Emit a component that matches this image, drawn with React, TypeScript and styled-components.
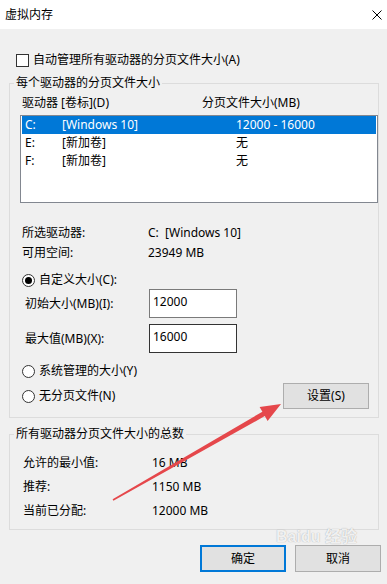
import styled, { createGlobalStyle } from "styled-components";

const GlobalStyle = createGlobalStyle`
  html, body {
    margin: 0;
    padding: 0;
    background: #f0f0f0;
  }
`;

const Dialog = styled.div`
  position: relative;
  width: 387px;
  height: 584px;
  overflow: hidden;
  background: #f0f0f0;
  font-family: "Noto Sans", "Noto Sans CJK SC", sans-serif;
  font-size: 12px;
  line-height: 16px;
  color: #000;
`;

const TitleBar = styled.div`
  height: 29px;
  background: #fff;
  display: flex;
  align-items: center;
  justify-content: space-between;
  padding: 0 5px 0 5px;
`;

const Body = styled.div`
  padding: 23px 0 0 9px;
`;

const CheckRow = styled.label`
  display: flex;
  align-items: center;
  gap: 4px;
  height: 16px;
  padding-left: 7px;
`;

const Box = styled.span`
  width: 13px;
  height: 13px;
  box-sizing: border-box;
  border: 1px solid #333;
  background: #fff;
`;

const Group = styled.fieldset<{ $top: number }>`
  margin: ${({ $top }) => $top}px 0 0 0;
  width: 370px;
  box-sizing: border-box;
  border: 1px solid #dcdcdc;
  padding: 0;
  min-width: 0;
`;

const Legend = styled.legend`
  margin-left: 4px;
  padding: 0 2px;
  line-height: 16px;
`;

const GroupBody = styled.div<{ $pad: string }>`
  padding: ${({ $pad }) => $pad};
`;

const HeaderRow = styled.div`
  display: grid;
  grid-template-columns: 180px 1fr;
  height: 16px;
  padding-left: 2px;
`;

const ListBox = styled.div`
  margin-top: 4px;
  width: 358px;
  height: 88px;
  box-sizing: border-box;
  border: 1px solid #828790;
  background: #fff;
`;

const ListRow = styled.div<{ $selected?: boolean }>`
  display: grid;
  grid-template-columns: 37px 174px 1fr;
  align-items: center;
  height: 18px;
  margin: 0 1px;
  padding-left: 3px;
  background: ${({ $selected }) => ($selected ? "#0078d7" : "transparent")};
  color: ${({ $selected }) => ($selected ? "#fff" : "#000")};
`;

const InfoBlock = styled.div`
  margin-top: 20px;
`;

const InfoRow = styled.div<{ $label: number; $height: number }>`
  display: grid;
  grid-template-columns: ${({ $label }) => $label}px 1fr;
  align-items: center;
  height: ${({ $height }) => $height}px;
  padding-left: 2px;
`;

const RadioRow = styled.label<{ $top: number }>`
  display: flex;
  align-items: center;
  gap: 4px;
  height: 16px;
  margin-top: ${({ $top }) => $top}px;
  padding-left: 2px;
`;

const Radio = styled.span<{ $checked?: boolean }>`
  position: relative;
  width: 13px;
  height: 13px;
  box-sizing: border-box;
  border: 1px solid #333;
  border-radius: 50%;
  background: #fff;

  &::after {
    content: "";
    display: ${({ $checked }) => ($checked ? "block" : "none")};
    position: absolute;
    left: 2px;
    top: 2px;
    width: 7px;
    height: 7px;
    border-radius: 50%;
    background: #000;
  }
`;

const SizeRow = styled.div<{ $top: number }>`
  display: grid;
  grid-template-columns: 124px 88px;
  align-items: center;
  margin-top: ${({ $top }) => $top}px;
  padding-left: 5px;
`;

const SizeInput = styled.input<{ $dark?: boolean }>`
  width: 88px;
  height: 29px;
  box-sizing: border-box;
  margin: 0;
  padding: 3px 3px 8px;
  border: 1px solid ${({ $dark }) => ($dark ? "#333" : "#7a7a7a")};
  border-radius: 0;
  background: #fff;
  font: inherit;
  color: #000;
  outline: none;
`;

const LastRow = styled.div`
  display: flex;
  align-items: center;
  justify-content: space-between;
  height: 26px;
  margin-top: 4px;
  padding-right: 9px;
`;

const Button = styled.button<{ $default?: boolean; $h: number }>`
  width: 86px;
  height: ${({ $h }) => $h}px;
  box-sizing: border-box;
  margin: 0;
  padding: 0;
  border: ${({ $default }) => ($default ? "2px solid #0078d7" : "1px solid #adadad")};
  border-radius: 0;
  background: #e1e1e1;
  font: inherit;
  color: #000;
`;

const Footer = styled.div`
  display: flex;
  justify-content: flex-end;
  gap: 9px;
  margin-top: 15px;
  padding-right: 6px;
`;

const Overlay = styled.svg`
  position: absolute;
  left: 0;
  top: 0;
  pointer-events: none;
`;

// faint baidu watermark, kept above the button captions
const Watermark = styled.div`
  position: absolute;
  left: 276px;
  top: 529px;
  pointer-events: none;
  color: rgba(255, 255, 255, 0.85);
  text-shadow: 0 0 1px rgba(0, 0, 0, 0.35);
  font-family: "Liberation Sans", "Noto Sans CJK SC", sans-serif;
  font-weight: bold;
  font-size: 16px;
  line-height: 16px;
`;

const drives = [
  { drive: "C:", label: "[Windows 10]", size: "12000 - 16000", selected: true },
  { drive: "E:", label: "[新加卷]", size: "无" },
  { drive: "F:", label: "[新加卷]", size: "无" },
];

export default function App() {
  return (
    <Dialog>
      <GlobalStyle />
      <TitleBar>
        <span>虚拟内存</span>
        <svg width="10" height="10" viewBox="0 0 10 10">
          <path d="M0.5 0.5 L9.5 9.5 M9.5 0.5 L0.5 9.5" stroke="#000" strokeWidth="1" />
        </svg>
      </TitleBar>
      <Body>
        <CheckRow>
          <Box />
          自动管理所有驱动器的分页文件大小(A)
        </CheckRow>

        <Group $top={7}>
          <Legend>每个驱动器的分页文件大小</Legend>
          <GroupBody $pad="4px 0 8px 10px">
            <HeaderRow>
              <span>驱动器 [卷标](D)</span>
              <span>分页文件大小(MB)</span>
            </HeaderRow>
            <ListBox>
              {drives.map((d) => (
                <ListRow key={d.drive} $selected={d.selected}>
                  <span>{d.drive}</span>
                  <span>{d.label}</span>
                  <span>{d.size}</span>
                </ListRow>
              ))}
            </ListBox>

            <InfoBlock>
              <InfoRow $label={126} $height={20}>
                <span>所选驱动器:</span>
                <span>C:&nbsp;&nbsp;[Windows 10]</span>
              </InfoRow>
              <InfoRow $label={126} $height={20}>
                <span>可用空间:</span>
                <span>23949 MB</span>
              </InfoRow>
            </InfoBlock>

            <RadioRow $top={9}>
              <Radio $checked />
              自定义大小(C):
            </RadioRow>
            <SizeRow $top={1}>
              <span>初始大小(MB)(I):</span>
              <SizeInput defaultValue="12000" />
            </SizeRow>
            <SizeRow $top={6}>
              <span>最大值(MB)(X):</span>
              <SizeInput $dark defaultValue="16000" />
            </SizeRow>
            <RadioRow $top={10}>
              <Radio />
              系统管理的大小(Y)
            </RadioRow>
            <LastRow>
              <RadioRow $top={0}>
                <Radio />
                无分页文件(N)
              </RadioRow>
              <Button $h={26}>设置(S)</Button>
            </LastRow>
          </GroupBody>
        </Group>

        <Group $top={8}>
          <Legend>所有驱动器分页文件大小的总数</Legend>
          <GroupBody $pad="9px 0 6px 11px">
            <InfoRow $label={129} $height={24}>
              <span>允许的最小值:</span>
              <span>16 MB</span>
            </InfoRow>
            <InfoRow $label={129} $height={24}>
              <span>推荐:</span>
              <span>1150 MB</span>
            </InfoRow>
            <InfoRow $label={129} $height={24}>
              <span>当前已分配:</span>
              <span>12000 MB</span>
            </InfoRow>
          </GroupBody>
        </Group>

        <Footer>
          <Button $default $h={27}>确定</Button>
          <Button $h={27}>取消</Button>
        </Footer>
      </Body>

      <Watermark>Baidu 经验</Watermark>

      <Overlay width="387" height="584" viewBox="0 0 387 584">
        <polygon
          points="112.6,499.3 262.4,411.7 259.6,406.9 281,404 267.6,420.9 264.8,416.1 113.4,500.7"
          fill="#e5474b"
        />
      </Overlay>
    </Dialog>
  );
}
